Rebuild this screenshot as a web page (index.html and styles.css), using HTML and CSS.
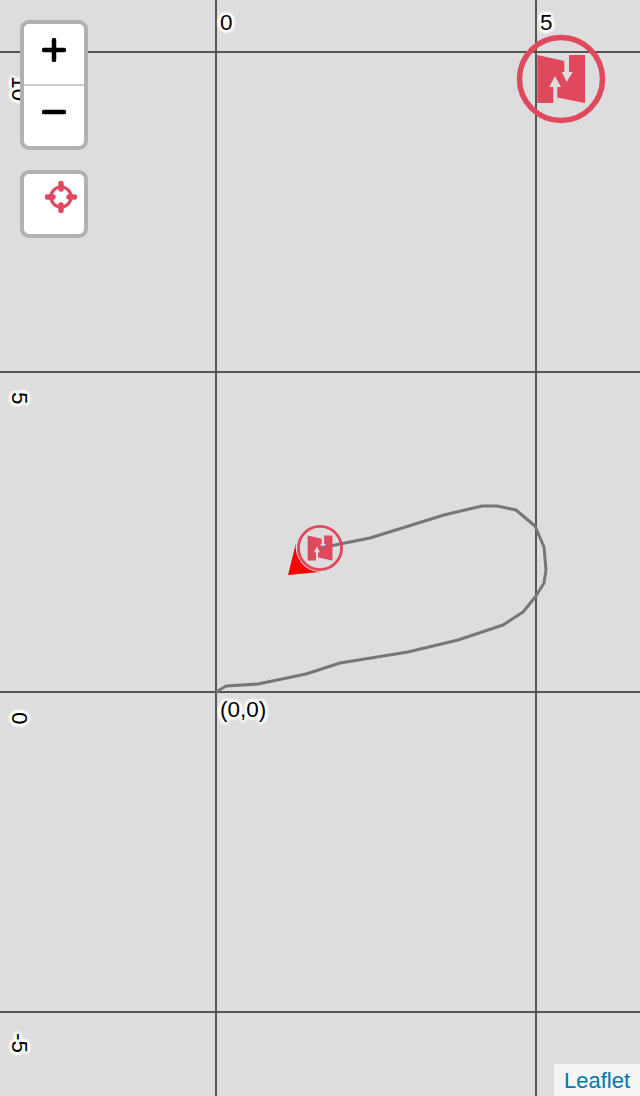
FILE: index.html
```html
<!DOCTYPE html>
<html lang="en">
<head>
    <meta charset="UTF-8">
    <title>Map</title>
    <link rel="stylesheet" href="styles.css">
</head>
<body>
    <div class="map">
        <svg class="overlay" width="640" height="1096" viewBox="0 0 640 1096">
            <defs>
                <g id="marker">
                    <circle cx="0" cy="0" r="41.5" fill="none" stroke="#e0485e" stroke-width="5.5"/>
                    <path fill="#e0485e" d="M-23.7 -24 L3.3 -18 V-7 H0.7 L5.7 3 L11.7 -7 H8 V-24 H24 V24 L-3.7 18.5 V8 H0 L-6 -3 L-11.7 8 H-7.7 V24 H-23.7 Z"/>
                </g>
            </defs>

            <!-- grid -->
            <g class="grid">
                <line x1="0" y1="52" x2="640" y2="52"/>
                <line x1="0" y1="372" x2="640" y2="372"/>
                <line x1="0" y1="692" x2="640" y2="692"/>
                <line x1="0" y1="1012" x2="640" y2="1012"/>
                <line x1="216" y1="0" x2="216" y2="1096"/>
                <line x1="536" y1="0" x2="536" y2="1096"/>
            </g>

            <!-- track -->
            <polyline class="track" points="216,692 226,686 258,684 306,674 340,663 408,652 458,640 503,625 523,612 536,596 544,583 546,570 544,547 535,526 516,510 497,506 482,506 444,515 370,538 320,548"/>

            <!-- heading cone + markers -->
            <path class="cone" d="M296 543 L288 575 L320 572 A25 25 0 0 1 296 543 Z"/>
            <use href="#marker" transform="translate(320 548) scale(0.52)"/>
            <use href="#marker" transform="translate(561 79)"/>
        </svg>

        <span class="label top-0">0</span>
        <span class="label top-5">5</span>
        <span class="label origin">(0,0)</span>
        <span class="label side side-10">10</span>
        <span class="label side side-5">5</span>
        <span class="label side side-0">0</span>
        <span class="label side side-m5">-5</span>

        <div class="controls">
            <div class="box">
                <a class="btn btn-first" aria-label="Zoom in">
                    <svg width="24" height="24" viewBox="0 0 24 24"><path class="glyph" d="M2 12 H22 M12 2 V22"/></svg>
                </a>
                <a class="btn" aria-label="Zoom out">
                    <svg width="24" height="24" viewBox="0 0 24 24"><path class="glyph" d="M2 12 H22"/></svg>
                </a>
            </div>
            <div class="box">
                <a class="btn btn-locate" aria-label="Locate">
                    <svg width="32" height="32" viewBox="0 0 32 32">
                        <circle class="locate-ring" cx="16" cy="16" r="10"/>
                        <path class="locate-ticks" d="M2.5 16 H8 M24 16 H29.5 M16 2.5 V8 M16 24 V29.5"/>
                    </svg>
                </a>
            </div>
        </div>

        <div class="attribution"><a>Leaflet</a></div>
    </div>
</body>
</html>
```

FILE: styles.css
```css
body { margin: 0; font-family: "Liberation Sans", Arial, sans-serif; }

.map { position: relative; width: 640px; height: 1096px; overflow: hidden; background-color: #ddd; }
.overlay { position: absolute; left: 0; top: 0; }

.grid line { stroke: #555; stroke-width: 2; }
.track { fill: none; stroke: #777; stroke-width: 3; stroke-linejoin: round; }
.cone { fill: #f00; }

/* grid labels */
.label {
    position: absolute;
    font-size: 22.5px;
    line-height: 24px;
    color: #000;
    text-shadow: 3px 0 2px #fff, -3px 0 2px #fff, 0 3px 2px #fff, 0 -3px 2px #fff, 2px 2px 2px #fff, -2px -2px 2px #fff, 2px -2px 2px #fff, -2px 2px 2px #fff;
}
.top-0 { left: 220px; top: 11px; }
.top-5 { left: 540px; top: 11px; }
.origin { left: 220px; top: 698px; }
.side { left: 7px; writing-mode: vertical-rl; }
.side-10 { top: 76px; }
.side-5 { top: 392px; }
.side-0 { top: 712px; }
.side-m5 { top: 1033px; }

/* zoom + locate */
.controls { position: absolute; left: 20px; top: 20px; display: flex; flex-direction: column; gap: 20px; }
.box { width: 60px; border: 4px solid #b1b1b1; border-radius: 9px; background-color: #fff; }
.btn { box-sizing: border-box; display: flex; justify-content: center; align-items: center; width: 60px; height: 60px; padding-bottom: 8px; }
.btn-first { height: 62px; border-bottom: 2px solid #ccc; }
.btn-locate { justify-content: flex-start; align-items: flex-start; padding: 7px 0 0 21px; }
.glyph { fill: none; stroke: #000; stroke-width: 4.5; stroke-linecap: round; }
.locate-ring { fill: none; stroke: #e0485e; stroke-width: 3.2; }
.locate-ticks { fill: none; stroke: #e0485e; stroke-width: 5.5; stroke-linecap: round; }

.attribution {
    position: absolute;
    right: 0;
    bottom: 0;
    height: 32px;
    padding: 0 10px;
    font-size: 22px;
    line-height: 34px;
    background-color: rgba(255, 255, 255, 0.7);
    color: #0078a8;
}
```
